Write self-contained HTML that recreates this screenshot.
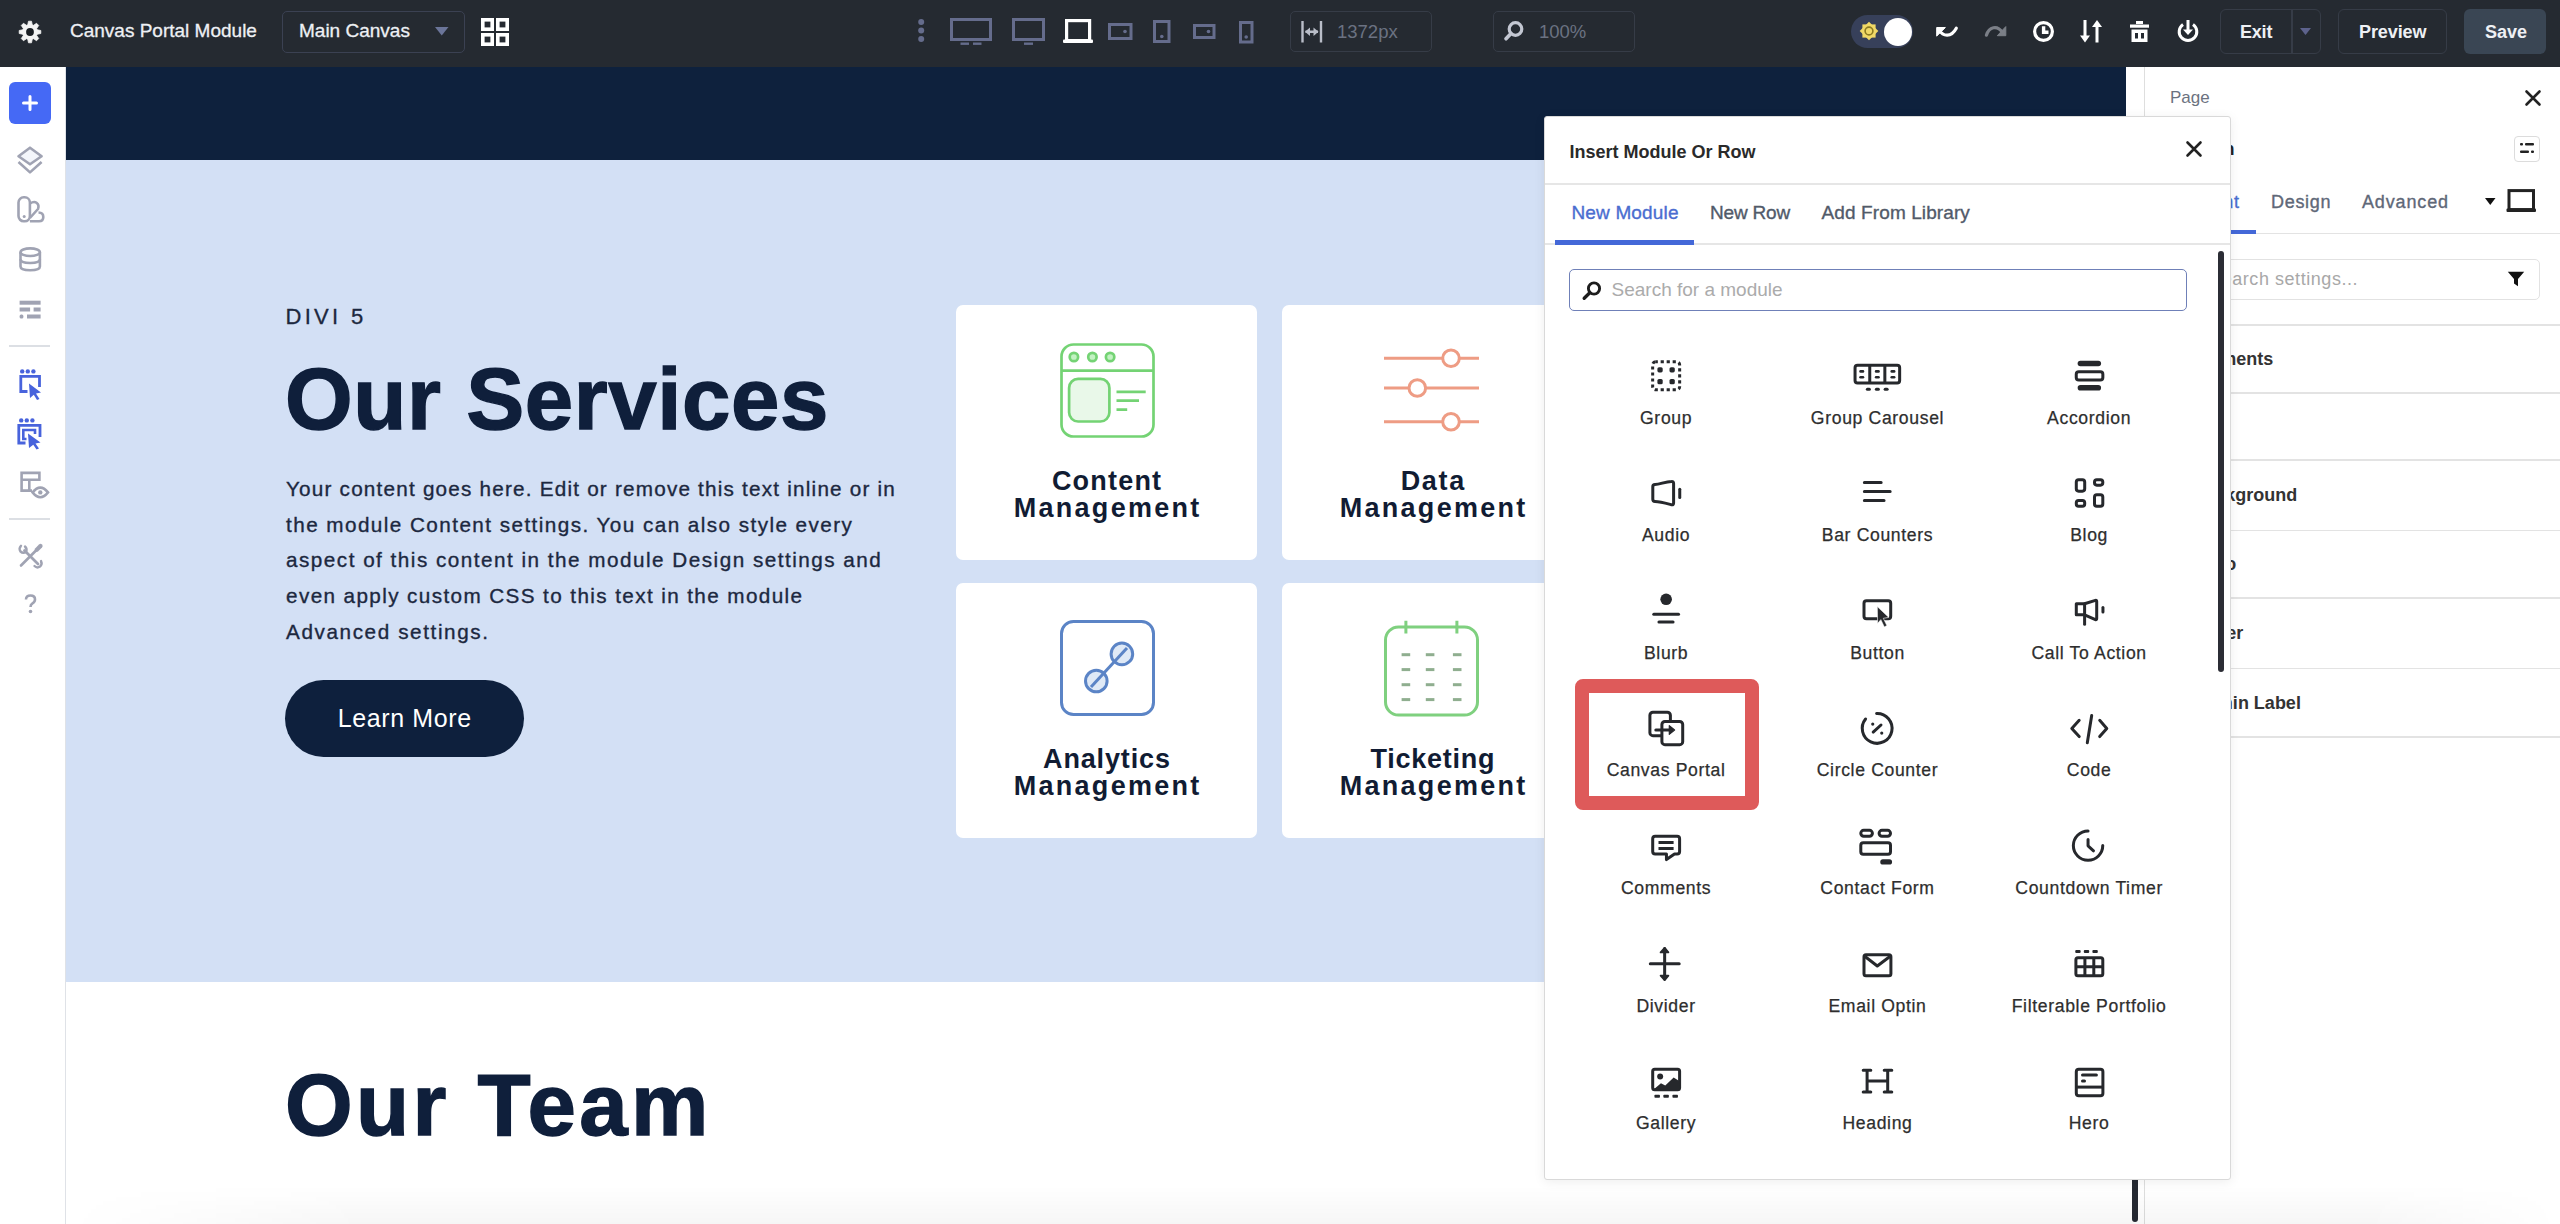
<!DOCTYPE html>
<html><head><meta charset="utf-8"><title>Canvas Portal Module</title>
<style>
*{margin:0;padding:0;box-sizing:border-box}
html,body{width:2560px;height:1224px;overflow:hidden;background:#fff;font-family:"Liberation Sans",sans-serif}
.a{position:absolute}
.t{white-space:nowrap;line-height:1}
svg{display:block;overflow:visible}
</style></head>
<body>
<div class="a" style="left:66px;top:67px;width:2060px;height:93px;background:#0e213d"></div>
<div class="a" style="left:66px;top:160px;width:2060px;height:822px;background:#d3e0f5"></div>
<div class="a" style="left:66px;top:982px;width:2060px;height:242px;background:#fff"></div>
<div class="a" style="left:2126px;top:67px;width:18px;height:1157px;background:#fff"></div>
<div class="a" style="left:0px;top:67px;width:65px;height:1157px;background:#fff"></div>
<div class="a" style="left:65px;top:67px;width:1px;height:1157px;background:#dfe2e7"></div>
<div class="a" style="left:9px;top:82px;width:42px;height:42px;border-radius:6px;background:#4569f5"></div>
<svg class="a" style="left:21px;top:94px" width="18" height="18"><path d="M9 2.5V15.5M2.5 9H15.5" stroke="#fff" stroke-width="3" stroke-linecap="round"/></svg>
<svg class="a" style="left:17px;top:146px" width="26" height="28"><g fill="none" stroke="#a0a3b3" stroke-width="2.6" stroke-linejoin="round"><path d="M13 1.7L24.6 10.2 13 18.3 1.5 10.2Z" fill="#f4f6fb"/><path d="M1.5 16L13 26.4 24.6 16"/></g></svg>
<svg class="a" style="left:17px;top:196px" width="28" height="27"><g fill="none" stroke="#a0a3b3" stroke-width="2.6" stroke-linejoin="round"><rect x="1.5" y="1.3" width="11.4" height="24" rx="5.2"/><path d="M12.9 7.5Q17 5 19.5 6.8Q22.5 9 21 13L12.9 22"/><path d="M12.9 25.3H22Q26.3 25.3 26.3 21Q26.3 16.6 21.5 16.5"/></g><circle cx="7.2" cy="20.5" r="1.5" fill="#a0a3b3"/></svg>
<svg class="a" style="left:19px;top:247px" width="23" height="25"><g fill="none" stroke="#a0a3b3" stroke-width="2.6"><ellipse cx="11.2" cy="5.2" rx="9.7" ry="3.8"/><path d="M1.5 5.2V19.5Q1.5 23.2 11.2 23.2Q20.9 23.2 20.9 19.5V5.2"/><path d="M1.5 12.3Q1.5 16 11.2 16Q20.9 16 20.9 12.3"/></g></svg>
<svg class="a" style="left:19px;top:300px" width="23" height="21"><g fill="#a0a3b3"><rect x="0.6" y="0.7" width="21" height="4"/><rect x="0.6" y="7.5" width="10.5" height="4"/><rect x="14.6" y="7.5" width="7" height="4"/><rect x="0.6" y="14.5" width="3.8" height="4" rx="1.5"/><rect x="8" y="14.5" width="13.6" height="4"/></g></svg>
<div class="a" style="left:9px;top:345px;width:41px;height:1.5px;background:#dcdfe4"></div>
<svg class="a" style="left:19px;top:369px" width="23" height="31"><g fill="#4863dc"><circle cx="3.2" cy="2.4" r="2.2"/><circle cx="8.8" cy="2.4" r="2.2"/><circle cx="14.4" cy="2.4" r="2.2"/></g><path d="M8.5 22.5H1.8V7.3H20.5V18" fill="none" stroke="#4863dc" stroke-width="2.8"/><path d="M10 14.5L22 23.5 17 24.5 20.5 30 18 31 14.8 25.8 11 29Z" fill="#4863dc"/></svg>
<svg class="a" style="left:17px;top:418px" width="26" height="31"><g fill="#4863dc"><circle cx="4.2" cy="2.4" r="2.2"/><circle cx="9.8" cy="2.4" r="2.2"/><circle cx="15.4" cy="2.4" r="2.2"/></g><path d="M8.5 25H1.8V7.3H23V19" fill="none" stroke="#4863dc" stroke-width="2.8"/><path d="M9.5 21H6.3V12H18V16" fill="none" stroke="#4863dc" stroke-width="2.6"/><path d="M11 15.5L23.5 24.5 18.5 25.5 22 30.5 19.5 31.5 16.3 26.8 12 30Z" fill="#4863dc"/></svg>
<svg class="a" style="left:19px;top:470px" width="32" height="31"><g fill="none" stroke="#a0a3b3" stroke-width="2.6"><path d="M13 20.6H2.6V2.9H20.4V11"/><path d="M2.6 9.7H20.4M10.3 9.7V20.6"/><path d="M13.6 22.4Q21.3 12.8 29 22.4Q21.3 32 13.6 22.4Z" fill="#fff"/></g><circle cx="21.3" cy="22.4" r="2.2" fill="#a0a3b3"/></svg>
<div class="a" style="left:9px;top:518px;width:41px;height:1.5px;background:#dcdfe4"></div>
<svg class="a" style="left:17px;top:544px" width="26" height="24"><g fill="none" stroke="#a0a3b3" stroke-linecap="round"><path d="M7.5 6.5L21 20" stroke-width="2.8"/><path d="M4 1.8Q1.5 4.5 3.5 7.5Q6 9.8 9 8Q10.5 4.8 8 2.5" stroke-width="2.4"/><path d="M24 17Q25.5 20.5 23 22.5Q20 24.5 17.5 22" stroke-width="2.4"/><path d="M19 6.5L4 21.5" stroke-width="2.6"/><path d="M19.8 5.7L23.5 2" stroke-width="4.2"/></g></svg>
<svg class="a" style="left:24px;top:594px" width="13" height="20"><path d="M2 5.5Q2 1.5 6.5 1.5Q11 1.5 11 5.3Q11 8 8.5 9.3Q6.5 10.5 6.5 13" fill="none" stroke="#a0a3b3" stroke-width="2.6"/><circle cx="6.5" cy="17.5" r="1.8" fill="#a0a3b3"/></svg>
<div class="a t" style="left:285.5px;top:305.7px;font-size:22px;color:#1c2840;letter-spacing:3.3px;-webkit-text-stroke:0.3px #1c2840">DIVI 5</div>
<div class="a t" style="left:285.0px;top:354.9px;font-size:87px;color:#0f1f3b;font-weight:bold;letter-spacing:0.6px;-webkit-text-stroke:1.4px #0f1f3b">Our Services</div>
<div class="a t" style="left:286.0px;top:478.7px;font-size:20.7px;color:#1c2840;letter-spacing:1.21px;-webkit-text-stroke:0.35px #1c2840">Your content goes here. Edit or remove this text inline or in</div>
<div class="a t" style="left:286.0px;top:514.5px;font-size:20.7px;color:#1c2840;letter-spacing:1.44px;-webkit-text-stroke:0.35px #1c2840">the module Content settings. You can also style every</div>
<div class="a t" style="left:286.0px;top:550.3px;font-size:20.7px;color:#1c2840;letter-spacing:1.49px;-webkit-text-stroke:0.35px #1c2840">aspect of this content in the module Design settings and</div>
<div class="a t" style="left:286.0px;top:586.1px;font-size:20.7px;color:#1c2840;letter-spacing:1.39px;-webkit-text-stroke:0.35px #1c2840">even apply custom CSS to this text in the module</div>
<div class="a t" style="left:286.0px;top:621.9px;font-size:20.7px;color:#1c2840;letter-spacing:1.6px;-webkit-text-stroke:0.35px #1c2840">Advanced settings.</div>
<div class="a" style="left:285px;top:680px;width:239px;height:77px;border-radius:39px;background:#0e203d"></div>
<div class="a t" style="left:337.8px;top:705.8px;font-size:25px;color:#fff;letter-spacing:0.6px;">Learn More</div>
<div class="a t" style="left:285.0px;top:1061.3px;font-size:87px;color:#0f1f3b;font-weight:bold;letter-spacing:3.4px;-webkit-text-stroke:1.4px #0f1f3b">Our Team</div>
<div class="a" style="left:956px;top:305px;width:301px;height:255px;border-radius:7px;background:#fff"></div>
<div class="a" style="left:1282px;top:305px;width:301px;height:255px;border-radius:7px;background:#fff"></div>
<div class="a" style="left:956px;top:583px;width:301px;height:255px;border-radius:7px;background:#fff"></div>
<div class="a" style="left:1282px;top:583px;width:301px;height:255px;border-radius:7px;background:#fff"></div>
<svg class="a" style="left:1060px;top:343px" width="95" height="95"><g fill="none" stroke="#74d374" stroke-width="2.7"><rect x="1.5" y="1.5" width="92" height="92" rx="12"/><path d="M1.5 27.6H93.5"/><g fill="#c2f2c2"><circle cx="13.9" cy="14" r="4.2"/><circle cx="32.4" cy="14" r="4.2"/><circle cx="50.1" cy="14" r="4.2"/></g><rect x="9.1" y="35.9" width="40.3" height="42.6" rx="9" fill="#e9f8e9"/><path d="M56.5 48.9H85.7M56.5 57.7H79M56.5 66.7H67.2"/></g></svg>
<svg class="a" style="left:1382px;top:340px" width="100" height="100"><g fill="none" stroke="#ee9c84" stroke-width="3"><path d="M2 18.3H97M2 48H97M2 81.7H97"/></g><g fill="#fff" stroke="#ee9c84" stroke-width="3"><circle cx="69" cy="18.3" r="8.3"/><circle cx="35.3" cy="48" r="8.3"/><circle cx="69" cy="81.7" r="8.3"/></g></svg>
<div class="a t" style="left:956.0px;top:468.1px;width:301px;text-align:center;font-size:27px;color:#111c33;font-weight:bold;letter-spacing:1.2px;text-indent:1.2px;">Content</div>
<div class="a t" style="left:956.0px;top:495.1px;width:301px;text-align:center;font-size:27px;color:#111c33;font-weight:bold;letter-spacing:2.3px;text-indent:2.3px;">Management</div>
<div class="a t" style="left:1282.0px;top:468.1px;width:301px;text-align:center;font-size:27px;color:#111c33;font-weight:bold;letter-spacing:1.7px;text-indent:1.7px;">Data</div>
<div class="a t" style="left:1282.0px;top:495.1px;width:301px;text-align:center;font-size:27px;color:#111c33;font-weight:bold;letter-spacing:2.3px;text-indent:2.3px;">Management</div>
<svg class="a" style="left:1060px;top:620px" width="95" height="96"><rect x="1.5" y="1.5" width="92" height="93" rx="12" fill="none" stroke="#5b84c6" stroke-width="3"/><g fill="#dfe9f6" stroke="#5b84c6" stroke-width="3"><circle cx="61.9" cy="33.9" r="10.8"/><circle cx="36.3" cy="61" r="10.8"/></g><path d="M31 67L67 28" stroke="#5b84c6" stroke-width="3"/></svg>
<svg class="a" style="left:1382px;top:618px" width="100" height="100"><g fill="none" stroke="#7fd07f" stroke-width="3"><rect x="3.5" y="9" width="92" height="88" rx="13"/><path d="M23.9 2.7V15.5M74.9 2.7V15.5"/></g><g stroke="#8fae8f" stroke-width="3"><path d="M19.6 36.7H28.2"/><path d="M19.6 51.6H28.2"/><path d="M19.6 66.7H28.2"/><path d="M19.6 81.6H28.2"/><path d="M43.8 36.7H52.4"/><path d="M43.8 51.6H52.4"/><path d="M43.8 66.7H52.4"/><path d="M43.8 81.6H52.4"/><path d="M70.9 36.7H79.5"/><path d="M70.9 51.6H79.5"/><path d="M70.9 66.7H79.5"/><path d="M70.9 81.6H79.5"/></g></svg>
<div class="a t" style="left:956.0px;top:746.3px;width:301px;text-align:center;font-size:27px;color:#111c33;font-weight:bold;letter-spacing:0.85px;text-indent:0.85px;">Analytics</div>
<div class="a t" style="left:956.0px;top:773.3px;width:301px;text-align:center;font-size:27px;color:#111c33;font-weight:bold;letter-spacing:2.3px;text-indent:2.3px;">Management</div>
<div class="a t" style="left:1282.0px;top:746.3px;width:301px;text-align:center;font-size:27px;color:#111c33;font-weight:bold;letter-spacing:0.75px;text-indent:0.75px;">Ticketing</div>
<div class="a t" style="left:1282.0px;top:773.3px;width:301px;text-align:center;font-size:27px;color:#111c33;font-weight:bold;letter-spacing:2.3px;text-indent:2.3px;">Management</div>
<div class="a" style="left:2144px;top:67px;width:416px;height:1157px;background:#fff;border-left:1px solid #dedede"></div>
<div class="a t" style="left:2170.0px;top:89.1px;font-size:17px;color:#6b7280;">Page</div>
<svg class="a" style="left:2525px;top:90px" width="16" height="16"><path d="M1.5 1.5L14.5 14.5M14.5 1.5L1.5 14.5" stroke="#222" stroke-width="2.6" stroke-linecap="round"/></svg>
<div class="a t" style="left:2114.6px;top:139.8px;width:120px;text-align:right;font-size:18px;color:#222;font-weight:bold;">Section</div>
<div class="a" style="left:2513.5px;top:135.5px;width:26px;height:26px;border:1.2px solid #dcdcdc;border-radius:4px;background:#fff"></div>
<svg class="a" style="left:2519px;top:142px" width="16" height="13"><g fill="#222"><rect x="1" y="1" width="3" height="2.6" rx="1"/><rect x="6" y="1" width="9" height="2.6" rx="1"/><rect x="1" y="8.5" width="9" height="2.6" rx="1"/><rect x="12" y="8.5" width="3" height="2.6" rx="1"/></g></svg>
<div class="a t" style="left:2119.7px;top:192.6px;width:120px;text-align:right;font-size:18px;color:#4a6dd0;letter-spacing:0.7px;-webkit-text-stroke:0.35px #4a6dd0">Content</div>
<div class="a t" style="left:2271.0px;top:192.6px;font-size:18px;color:#5f6878;letter-spacing:0.7px;-webkit-text-stroke:0.35px #5f6878">Design</div>
<div class="a t" style="left:2362.0px;top:192.6px;font-size:18px;color:#5f6878;letter-spacing:0.85px;-webkit-text-stroke:0.35px #5f6878">Advanced</div>
<svg class="a" style="left:2485px;top:198px" width="11" height="8"><path d="M0 0H10.5L5.25 7Z" fill="#111"/></svg>
<svg class="a" style="left:2506px;top:189px" width="31" height="25"><rect x="3" y="1.6" width="24.5" height="19" fill="none" stroke="#222" stroke-width="3"/><rect x="0.5" y="19.5" width="29.5" height="3.6" rx="1" fill="#222"/></svg>
<div class="a" style="left:2145px;top:232.5px;width:415px;height:1.5px;background:#e3e3e3"></div>
<div class="a" style="left:2160px;top:230px;width:96px;height:4px;background:#4468d8"></div>
<div class="a" style="left:2170px;top:258.5px;width:370px;height:41px;border:1.5px solid #e2e2e2;border-radius:5px"></div>
<div class="a t" style="left:2158.1px;top:270.3px;width:200px;text-align:right;font-size:18px;color:#a8a8a8;letter-spacing:0.55px;">Search settings...</div>
<svg class="a" style="left:2507px;top:271px" width="18" height="16"><path d="M0.8 0.8H17.2L11 8V15.2L7 12.5V8Z" fill="#111"/></svg>
<div class="a" style="left:2145px;top:324.25px;width:415px;height:1.5px;background:#e3e3e3"></div>
<div class="a" style="left:2145px;top:392.25px;width:415px;height:1.5px;background:#e3e3e3"></div>
<div class="a" style="left:2145px;top:459.25px;width:415px;height:1.5px;background:#e3e3e3"></div>
<div class="a" style="left:2145px;top:529.75px;width:415px;height:1.5px;background:#e3e3e3"></div>
<div class="a" style="left:2145px;top:597.25px;width:415px;height:1.5px;background:#e3e3e3"></div>
<div class="a" style="left:2145px;top:667.75px;width:415px;height:1.5px;background:#e3e3e3"></div>
<div class="a" style="left:2145px;top:736.25px;width:415px;height:1.5px;background:#e3e3e3"></div>
<div class="a t" style="left:2133.2px;top:349.8px;width:140px;text-align:right;font-size:18px;color:#2b2b2b;font-weight:bold;color:#333">Elements</div>
<div class="a t" style="left:2089.0px;top:417.8px;width:140px;text-align:right;font-size:18px;color:#2b2b2b;font-weight:bold;color:#333">Link</div>
<div class="a t" style="left:2157.3px;top:486.3px;width:140px;text-align:right;font-size:18px;color:#2b2b2b;font-weight:bold;color:#333">Background</div>
<div class="a t" style="left:2096.2px;top:554.6px;width:140px;text-align:right;font-size:18px;color:#2b2b2b;font-weight:bold;color:#333">Logo</div>
<div class="a t" style="left:2103.4px;top:623.8px;width:140px;text-align:right;font-size:18px;color:#2b2b2b;font-weight:bold;color:#333">Order</div>
<div class="a t" style="left:2160.9px;top:693.8px;width:140px;text-align:right;font-size:18px;color:#2b2b2b;font-weight:bold;color:#333">Admin Label</div>
<div class="a" style="left:2132px;top:1170px;width:6px;height:52px;background:#262a33;border-radius:3px"></div>
<div class="a" style="left:66px;top:1186px;width:2494px;height:38px;background:linear-gradient(rgba(0,0,0,0),rgba(0,0,0,0.035));-webkit-mask-image:linear-gradient(90deg,transparent 0,#000 300px,#000 2300px,transparent 2494px)"></div>
<div class="a" style="left:1544px;top:116px;width:687px;height:1064px;background:#fff;border:1px solid #d9d9d9;border-radius:3px;box-shadow:0 2px 12px rgba(0,0,0,0.07)"></div>
<div class="a t" style="left:1569.5px;top:142.8px;font-size:18px;color:#2a2a2a;font-weight:bold;">Insert Module Or Row</div>
<svg class="a" style="left:2186px;top:141px" width="16" height="16"><path d="M1.5 1.5L14.5 14.5M14.5 1.5L1.5 14.5" stroke="#222" stroke-width="2.6" stroke-linecap="round"/></svg>
<div class="a" style="left:1545px;top:183px;width:685px;height:2px;background:#e6e6e6"></div>
<div class="a t" style="left:1571.5px;top:202.9px;font-size:19px;color:#4a6dd0;letter-spacing:0.15px;-webkit-text-stroke:0.35px #4a6dd0">New Module</div>
<div class="a t" style="left:1710.0px;top:202.9px;font-size:19px;color:#515a69;letter-spacing:-0.2px;-webkit-text-stroke:0.35px #515a69">New Row</div>
<div class="a t" style="left:1821.6px;top:202.9px;font-size:19px;color:#515a69;letter-spacing:0.1px;-webkit-text-stroke:0.35px #515a69">Add From Library</div>
<div class="a" style="left:1545px;top:243px;width:685px;height:2px;background:#e6e6e6"></div>
<div class="a" style="left:1555px;top:240px;width:139px;height:4.5px;background:#4468d8"></div>
<div class="a" style="left:1569px;top:269px;width:618px;height:42px;border:1.8px solid #6f80b8;border-radius:5px"></div>
<svg class="a" style="left:1582px;top:281px" width="20" height="19"><circle cx="12" cy="7.5" r="5.6" fill="none" stroke="#1d1d1d" stroke-width="2.9"/><path d="M7.8 11.8L2.2 17.2" stroke="#1d1d1d" stroke-width="3.4" stroke-linecap="round"/></svg>
<div class="a t" style="left:1611.5px;top:279.9px;font-size:19px;color:#ababab;">Search for a module</div>
<div class="a" style="left:2217.5px;top:251px;width:6px;height:421px;background:#2b2d35;border-radius:3px"></div>
<svg class="a" style="left:1640.75px;top:355.60px" width="50" height="40"><rect x="11.65" y="5.8" width="27" height="28" rx="3" fill="none" stroke="#26282c" stroke-width="3.0" stroke-dasharray="3.2 2.8" stroke-dashoffset="1"/><rect x="16.40" y="11.15" width="5.3" height="5.3" rx="1.6" fill="#26282c"/><rect x="16.40" y="22.95" width="5.3" height="5.3" rx="1.6" fill="#26282c"/><rect x="28.50" y="11.15" width="5.3" height="5.3" rx="1.6" fill="#26282c"/><rect x="28.50" y="22.95" width="5.3" height="5.3" rx="1.6" fill="#26282c"/></svg>
<div class="a t" style="left:1560.8px;top:409.6px;width:210px;text-align:center;font-size:17.6px;color:#2e2e2e;letter-spacing:0.65px;text-indent:0.65px;-webkit-text-stroke:0.25px #2e2e2e">Group</div>
<svg class="a" style="left:1852.25px;top:355.60px" width="50" height="40"><rect x="3.05" y="9.3" width="44.6" height="17.6" rx="2.5" fill="none" stroke="#26282c" stroke-width="3.0"/><path d="M17.75 9.3V26.9M32.85 9.3V26.9" fill="none" stroke="#26282c" stroke-width="3.0"/><rect x="7.25" y="14.10" width="5" height="2.6" rx="1.3" fill="#26282c"/><rect x="7.25" y="20.00" width="5" height="2.6" rx="1.3" fill="#26282c"/><rect x="22.80" y="14.10" width="5" height="2.6" rx="1.3" fill="#26282c"/><rect x="22.80" y="20.00" width="5" height="2.6" rx="1.3" fill="#26282c"/><rect x="38.45" y="14.10" width="5" height="2.6" rx="1.3" fill="#26282c"/><rect x="38.45" y="20.00" width="5" height="2.6" rx="1.3" fill="#26282c"/><rect x="13.85" y="31.7" width="5" height="3" rx="1.5" fill="#26282c"/><rect x="22.85" y="31.7" width="5" height="3" rx="1.5" fill="#26282c"/><rect x="31.65" y="31.7" width="5" height="3" rx="1.5" fill="#26282c"/></svg>
<div class="a t" style="left:1772.2px;top:409.6px;width:210px;text-align:center;font-size:17.6px;color:#2e2e2e;letter-spacing:0.65px;text-indent:0.65px;-webkit-text-stroke:0.25px #2e2e2e">Group Carousel</div>
<svg class="a" style="left:2063.75px;top:355.60px" width="50" height="40"><rect x="13.65" y="4.8" width="23.4" height="5.5" rx="2.75" fill="#26282c"/><rect x="12.25" y="15.7" width="26.6" height="8.2" rx="2.5" fill="none" stroke="#26282c" stroke-width="3.0"/><rect x="13.65" y="28.9" width="23.4" height="5.7" rx="2.85" fill="#26282c"/></svg>
<div class="a t" style="left:1983.8px;top:409.6px;width:210px;text-align:center;font-size:17.6px;color:#2e2e2e;letter-spacing:0.65px;text-indent:0.65px;-webkit-text-stroke:0.25px #2e2e2e">Accordion</div>
<svg class="a" style="left:1640.75px;top:473.20px" width="50" height="40"><path d="M14 11.5C19 11.5 24 8.5 30.5 8.4Q32.6 8.3 32.6 10.4V30Q32.6 32.2 30.5 31.8C24 30 19 28.5 14 28.5Q11.8 28.5 11.8 26.3V13.7Q11.8 11.5 14 11.5Z" fill="none" stroke="#26282c" stroke-width="3.0" stroke-linejoin="round"/><path d="M38.75 16.2V24.4" fill="none" stroke="#26282c" stroke-width="3.0" stroke-linecap="round"/></svg>
<div class="a t" style="left:1560.8px;top:527.2px;width:210px;text-align:center;font-size:17.6px;color:#2e2e2e;letter-spacing:0.65px;text-indent:0.65px;-webkit-text-stroke:0.25px #2e2e2e">Audio</div>
<svg class="a" style="left:1852.25px;top:473.20px" width="50" height="40"><path d="M12.35 9.5H29.15M12.35 18.5H38.15M12.35 27.4H32.05" fill="none" stroke="#26282c" stroke-width="3.0" stroke-width="3" stroke-linecap="round"/></svg>
<div class="a t" style="left:1772.2px;top:527.2px;width:210px;text-align:center;font-size:17.6px;color:#2e2e2e;letter-spacing:0.65px;text-indent:0.65px;-webkit-text-stroke:0.25px #2e2e2e">Bar Counters</div>
<svg class="a" style="left:2063.75px;top:473.20px" width="50" height="40"><rect x="12.3" y="6.75" width="8.4" height="11.4" rx="2.3" fill="none" stroke="#26282c" stroke-width="3.0"/><rect x="30.5" y="6.75" width="8.3" height="5.4" rx="2.3" fill="none" stroke="#26282c" stroke-width="3.0"/><rect x="12.3" y="27.55" width="8.4" height="5.7" rx="2.3" fill="none" stroke="#26282c" stroke-width="3.0"/><rect x="30.5" y="21.65" width="8.3" height="11.6" rx="2.3" fill="none" stroke="#26282c" stroke-width="3.0"/></svg>
<div class="a t" style="left:1983.8px;top:527.2px;width:210px;text-align:center;font-size:17.6px;color:#2e2e2e;letter-spacing:0.65px;text-indent:0.65px;-webkit-text-stroke:0.25px #2e2e2e">Blog</div>
<svg class="a" style="left:1640.75px;top:590.80px" width="50" height="40"><circle cx="25.15" cy="8.3" r="5.8" fill="#26282c"/><path d="M12.75 23.2H37.55" fill="none" stroke="#26282c" stroke-width="3.0" stroke-width="5" stroke-linecap="round"/><path d="M17.95 31H32.05" fill="none" stroke="#26282c" stroke-width="3.0" stroke-width="3" stroke-linecap="round"/></svg>
<div class="a t" style="left:1560.8px;top:644.8px;width:210px;text-align:center;font-size:17.6px;color:#2e2e2e;letter-spacing:0.65px;text-indent:0.65px;-webkit-text-stroke:0.25px #2e2e2e">Blurb</div>
<svg class="a" style="left:1852.25px;top:590.80px" width="50" height="40"><rect x="12" y="9.65" width="26.7" height="18.1" rx="2.5" fill="none" stroke="#26282c" stroke-width="3.0"/><path d="M25.3 15.6L36.8 26.4L31.3 27.3L34.9 34.6L32.3 35.9L28.8 28.6L25.6 32.6Z" fill="#26282c" stroke="#fff" stroke-width="0.6"/></svg>
<div class="a t" style="left:1772.2px;top:644.8px;width:210px;text-align:center;font-size:17.6px;color:#2e2e2e;letter-spacing:0.65px;text-indent:0.65px;-webkit-text-stroke:0.25px #2e2e2e">Button</div>
<svg class="a" style="left:2063.75px;top:590.80px" width="50" height="40"><path d="M12.3 12.75H20.6L31.4 9.4Q32.7 9 32.7 10.5V27.6Q32.7 29.1 31.4 28.6L20.6 23.85H12.3Z" fill="none" stroke="#26282c" stroke-width="3.0" stroke-linejoin="round"/><path d="M20.6 12.75V33.3" fill="none" stroke="#26282c" stroke-width="3.0" stroke-linecap="round"/><path d="M38.95 16.4V21" fill="none" stroke="#26282c" stroke-width="3.0" stroke-linecap="round"/></svg>
<div class="a t" style="left:1983.8px;top:644.8px;width:210px;text-align:center;font-size:17.6px;color:#2e2e2e;letter-spacing:0.65px;text-indent:0.65px;-webkit-text-stroke:0.25px #2e2e2e">Call To Action</div>
<svg class="a" style="left:1640.75px;top:708.40px" width="50" height="40"><rect x="8.9" y="4.15" width="20.5" height="23.5" rx="3" fill="none" stroke="#26282c" stroke-width="3.0"/><rect x="20.9" y="13.55" width="20.8" height="23.1" rx="3" fill="#fff" stroke="#26282c" stroke-width="3.0"/><path d="M14.8 22H29" fill="none" stroke="#26282c" stroke-width="3.0" stroke-linecap="round"/><path d="M28.3 17.6L33.6 22L28.3 26.4Z" fill="#26282c" stroke="#26282c" stroke-width="1.2" stroke-linejoin="round"/></svg>
<div class="a t" style="left:1560.8px;top:762.4px;width:210px;text-align:center;font-size:17.6px;color:#2e2e2e;letter-spacing:0.65px;text-indent:0.65px;-webkit-text-stroke:0.25px #2e2e2e">Canvas Portal</div>
<svg class="a" style="left:1852.25px;top:708.40px" width="50" height="40"><path d="M24.6 5.5A14.9 14.9 0 1 1 13.57 11.02" fill="none" stroke="#26282c" stroke-width="3.0" stroke-linecap="round"/><path d="M21.2 24.1L29 17" fill="none" stroke="#26282c" stroke-width="3.0" stroke-linecap="round"/><circle cx="20.75" cy="16.1" r="1.6" fill="#26282c"/><circle cx="29.75" cy="25.1" r="1.6" fill="#26282c"/></svg>
<div class="a t" style="left:1772.2px;top:762.4px;width:210px;text-align:center;font-size:17.6px;color:#2e2e2e;letter-spacing:0.65px;text-indent:0.65px;-webkit-text-stroke:0.25px #2e2e2e">Circle Counter</div>
<svg class="a" style="left:2063.75px;top:708.40px" width="50" height="40"><path d="M15.2 12.3L7.8 20.4L15.2 28.6M35.7 12.3L42.8 20.4L35.7 28.6M27.7 7.4L23.3 34.8" fill="none" stroke="#26282c" stroke-width="3.0" stroke-linecap="round" stroke-linejoin="round"/></svg>
<div class="a t" style="left:1983.8px;top:762.4px;width:210px;text-align:center;font-size:17.6px;color:#2e2e2e;letter-spacing:0.65px;text-indent:0.65px;-webkit-text-stroke:0.25px #2e2e2e">Code</div>
<svg class="a" style="left:1640.75px;top:826.00px" width="50" height="40"><path d="M14.2 10.35H36.1Q38.6 10.35 38.6 12.85V25.55Q38.6 28.05 36.1 28.05H33.5L25.45 33.6V28.05H14.2Q11.7 28.05 11.7 25.55V12.85Q11.7 10.35 14.2 10.35Z" fill="none" stroke="#26282c" stroke-width="3.0" stroke-linejoin="round"/><path d="M17.5 16.5H32.6M17.5 22.4H32.6" fill="none" stroke="#26282c" stroke-width="3.0" stroke-width="3"/></svg>
<div class="a t" style="left:1560.8px;top:880.0px;width:210px;text-align:center;font-size:17.6px;color:#2e2e2e;letter-spacing:0.65px;text-indent:0.65px;-webkit-text-stroke:0.25px #2e2e2e">Comments</div>
<svg class="a" style="left:1852.25px;top:826.00px" width="50" height="40"><rect x="8.8" y="4.35" width="11.6" height="5.9" rx="2.9" fill="none" stroke="#26282c" stroke-width="3.0"/><rect x="27.1" y="4.35" width="11.4" height="5.9" rx="2.9" fill="none" stroke="#26282c" stroke-width="3.0"/><rect x="8.8" y="16.65" width="29.7" height="11.6" rx="2.5" fill="none" stroke="#26282c" stroke-width="3.0"/><rect x="28.25" y="33.3" width="11.8" height="5.3" rx="2.65" fill="#26282c"/></svg>
<div class="a t" style="left:1772.2px;top:880.0px;width:210px;text-align:center;font-size:17.6px;color:#2e2e2e;letter-spacing:0.65px;text-indent:0.65px;-webkit-text-stroke:0.25px #2e2e2e">Contact Form</div>
<svg class="a" style="left:2063.75px;top:826.00px" width="50" height="40"><path d="M24.05 4.9A14.7 14.7 0 1 0 38.75 19.6" fill="none" stroke="#26282c" stroke-width="3.0" stroke-linecap="round"/><path d="M24.05 13.4V19.8L29.5 24.8" fill="none" stroke="#26282c" stroke-width="3.0" stroke-linecap="round" stroke-linejoin="round"/></svg>
<div class="a t" style="left:1983.8px;top:880.0px;width:210px;text-align:center;font-size:17.6px;color:#2e2e2e;letter-spacing:0.65px;text-indent:0.65px;-webkit-text-stroke:0.25px #2e2e2e">Countdown Timer</div>
<svg class="a" style="left:1640.75px;top:943.60px" width="50" height="40"><path d="M23.65 4.5V35M9.3 19.8H38.2" fill="none" stroke="#26282c" stroke-width="3.0" stroke-linecap="round"/><path d="M19.6 8.4L23.65 3.9L27.4 8.4Z" fill="#26282c" stroke="#26282c" stroke-width="1.8" stroke-linejoin="round"/><path d="M19.6 31.6L23.65 36.1L27.4 31.6Z" fill="#26282c" stroke="#26282c" stroke-width="1.8" stroke-linejoin="round"/></svg>
<div class="a t" style="left:1560.8px;top:997.6px;width:210px;text-align:center;font-size:17.6px;color:#2e2e2e;letter-spacing:0.65px;text-indent:0.65px;-webkit-text-stroke:0.25px #2e2e2e">Divider</div>
<svg class="a" style="left:1852.25px;top:943.60px" width="50" height="40"><rect x="12" y="10.65" width="26.9" height="21" rx="2" fill="none" stroke="#26282c" stroke-width="3.0"/><path d="M13 12.5L25.3 22L37.9 12.5" fill="none" stroke="#26282c" stroke-width="3.0" stroke-linejoin="round"/></svg>
<div class="a t" style="left:1772.2px;top:997.6px;width:210px;text-align:center;font-size:17.6px;color:#2e2e2e;letter-spacing:0.65px;text-indent:0.65px;-webkit-text-stroke:0.25px #2e2e2e">Email Optin</div>
<svg class="a" style="left:2063.75px;top:943.60px" width="50" height="40"><rect x="11.9" y="13.85" width="26.9" height="17.8" rx="2" fill="none" stroke="#26282c" stroke-width="3.0"/><path d="M20.9 13.85V31.6M29.8 13.85V31.6M11.9 22.7H38.8" fill="none" stroke="#26282c" stroke-width="3.0"/><rect x="11.25" y="5.9" width="5.4" height="3" rx="1" fill="#26282c"/><rect x="19.80" y="5.9" width="5.4" height="3" rx="1" fill="#26282c"/><rect x="28.40" y="5.9" width="5.4" height="3" rx="1" fill="#26282c"/></svg>
<div class="a t" style="left:1983.8px;top:997.6px;width:210px;text-align:center;font-size:17.6px;color:#2e2e2e;letter-spacing:0.65px;text-indent:0.65px;-webkit-text-stroke:0.25px #2e2e2e">Filterable Portfolio</div>
<svg class="a" style="left:1640.75px;top:1061.20px" width="50" height="40"><rect x="11.7" y="8.25" width="26.9" height="20.6" rx="2" fill="none" stroke="#26282c" stroke-width="3.0"/><circle cx="19.15" cy="15.5" r="3" fill="#26282c"/><path d="M12 29L19.95 22.2L24.25 24.5L32.65 16.5L38.6 20.2V29Z" fill="#26282c"/><rect x="13.45" y="33.8" width="5.5" height="3" rx="0.8" fill="#26282c"/><rect x="22.35" y="33.8" width="5.5" height="3" rx="0.8" fill="#26282c"/><rect x="31.45" y="33.8" width="5.5" height="3" rx="0.8" fill="#26282c"/></svg>
<div class="a t" style="left:1560.8px;top:1115.2px;width:210px;text-align:center;font-size:17.6px;color:#2e2e2e;letter-spacing:0.65px;text-indent:0.65px;-webkit-text-stroke:0.25px #2e2e2e">Gallery</div>
<svg class="a" style="left:1852.25px;top:1061.20px" width="50" height="40"><path d="M15.1 9.3V30.8M35.7 9.3V30.8M15.1 20H35.7" fill="none" stroke="#26282c" stroke-width="3.0"/><path d="M11.2 9.2H18.8M32.2 9.2H39.8M11.2 30.9H18.8M32.2 30.9H39.8" fill="none" stroke="#26282c" stroke-width="3.0" stroke-width="2.9" stroke-linecap="round"/></svg>
<div class="a t" style="left:1772.2px;top:1115.2px;width:210px;text-align:center;font-size:17.6px;color:#2e2e2e;letter-spacing:0.65px;text-indent:0.65px;-webkit-text-stroke:0.25px #2e2e2e">Heading</div>
<svg class="a" style="left:2063.75px;top:1061.20px" width="50" height="40"><rect x="12.3" y="8.25" width="26.6" height="26.5" rx="2.5" fill="none" stroke="#26282c" stroke-width="3.0"/><path d="M12.3 26.1H38.9" fill="none" stroke="#26282c" stroke-width="3.0"/><path d="M18.5 14H32.4M18.5 20H20.5" fill="none" stroke="#26282c" stroke-width="3.0" stroke-width="2.6" stroke-linecap="round"/></svg>
<div class="a t" style="left:1983.8px;top:1115.2px;width:210px;text-align:center;font-size:17.6px;color:#2e2e2e;letter-spacing:0.65px;text-indent:0.65px;-webkit-text-stroke:0.25px #2e2e2e">Hero</div>
<div class="a" style="left:1574.5px;top:679.2px;width:184px;height:131px;border:14.5px solid #de5a5a;border-radius:8px"></div>
<div class="a" style="left:0px;top:0px;width:2560px;height:67px;background:#252a31"></div>
<svg class="a" style="left:19px;top:20.5px" width="22" height="22"><path d="M9.48 0.21 L12.52 0.21 L13.22 3.73 L14.57 4.29 L17.56 2.29 L19.71 4.44 L17.71 7.43 L18.27 8.78 L21.79 9.48 L21.79 12.52 L18.27 13.22 L17.71 14.57 L19.71 17.56 L17.56 19.71 L14.57 17.71 L13.22 18.27 L12.52 21.79 L9.48 21.79 L8.78 18.27 L7.43 17.71 L4.44 19.71 L2.29 17.56 L4.29 14.57 L3.73 13.22 L0.21 12.52 L0.21 9.48 L3.73 8.78 L4.29 7.43 L2.29 4.44 L4.44 2.29 L7.43 4.29 L8.78 3.73Z" fill="#f4f4f4" stroke="#f4f4f4" stroke-width="0.8" stroke-linejoin="round"/><circle cx="11" cy="11" r="3.9" fill="#1b1f24"/></svg>
<div class="a t" style="left:70.0px;top:20.9px;font-size:19px;color:#eef0f4;-webkit-text-stroke:0.3px #eef0f4">Canvas Portal Module</div>
<div class="a" style="left:282px;top:11px;width:183px;height:42px;border:1.5px solid #3b4152;border-radius:5px"></div>
<div class="a t" style="left:299.0px;top:20.9px;font-size:19px;color:#eef0f4;-webkit-text-stroke:0.3px #eef0f4">Main Canvas</div>
<svg class="a" style="left:435px;top:27px" width="14" height="9"><path d="M0 0H13.5L6.75 8.5Z" fill="#6b7599"/></svg>
<svg class="a" style="left:481px;top:18px" width="28" height="28"><g fill="none" stroke="#fff" stroke-width="3.6"><rect x="1.8" y="1.8" width="9.4" height="9.4"/><rect x="16.8" y="1.8" width="9.4" height="9.4"/><rect x="1.8" y="16.8" width="9.4" height="9.4"/><rect x="16.8" y="16.8" width="9.4" height="9.4"/></g></svg>
<svg class="a" style="left:918px;top:19px" width="7" height="24"><g fill="#656c8c"><circle cx="3.2" cy="3" r="3"/><circle cx="3.2" cy="11.5" r="3"/><circle cx="3.2" cy="20" r="3"/></g></svg>
<svg class="a" style="left:950px;top:18px" width="44" height="28"><rect x="1.5" y="1.5" width="39" height="20" fill="none" stroke="#656c8c" stroke-width="3"/><rect x="0" y="20" width="42" height="3" fill="#656c8c"/><rect x="10.5" y="24.5" width="8.5" height="2.4" fill="#656c8c"/><rect x="23" y="24.5" width="8.5" height="2.4" fill="#656c8c"/></svg>
<svg class="a" style="left:1012px;top:18px" width="34" height="28"><rect x="1.5" y="1.5" width="30" height="20" fill="none" stroke="#656c8c" stroke-width="3"/><rect x="0" y="20" width="33" height="3" fill="#656c8c"/><rect x="12" y="24.5" width="9" height="2.4" fill="#656c8c"/></svg>
<svg class="a" style="left:1063px;top:19px" width="31" height="26"><rect x="3.6" y="1.6" width="23" height="20" fill="none" stroke="#fff" stroke-width="3.2"/><rect x="0" y="20.5" width="30" height="3.6" rx="1" fill="#fff"/></svg>
<svg class="a" style="left:1108px;top:23px" width="25" height="17"><rect x="1.5" y="1.5" width="21.5" height="14" fill="none" stroke="#656c8c" stroke-width="3"/><circle cx="17" cy="8.5" r="1.8" fill="#656c8c"/></svg>
<svg class="a" style="left:1153px;top:20px" width="18" height="23"><rect x="1.5" y="1.5" width="14.5" height="20" fill="none" stroke="#656c8c" stroke-width="3"/><circle cx="8.8" cy="16.5" r="1.8" fill="#656c8c"/></svg>
<svg class="a" style="left:1193px;top:24px" width="23" height="16"><rect x="1.5" y="1.5" width="19.5" height="12" fill="none" stroke="#656c8c" stroke-width="3"/><circle cx="15.5" cy="7.5" r="1.8" fill="#656c8c"/></svg>
<svg class="a" style="left:1239px;top:21px" width="15" height="23"><rect x="1.5" y="1.5" width="11.5" height="19.5" fill="none" stroke="#656c8c" stroke-width="3"/><circle cx="7.2" cy="16" r="1.8" fill="#656c8c"/></svg>
<div class="a" style="left:1290px;top:11px;width:142px;height:41px;border:1.5px solid #363c47;border-radius:5px"></div>
<svg class="a" style="left:1301px;top:21px" width="22" height="22"><g stroke="#b9bdc8" stroke-width="2.4" fill="none"><path d="M1.5 0V21.5M20 0V21.5M4.5 10.8H17"/></g><g fill="#b9bdc8"><path d="M4 10.8L9 6.5V15Z"/><path d="M17.5 10.8L12.5 6.5V15Z"/></g></svg>
<div class="a t" style="left:1337.0px;top:23.3px;font-size:18.5px;color:#6b7282;">1372px</div>
<div class="a" style="left:1493px;top:11px;width:142px;height:41px;border:1.5px solid #363c47;border-radius:5px"></div>
<svg class="a" style="left:1504px;top:21px" width="20" height="20"><circle cx="11.5" cy="8" r="6.3" fill="none" stroke="#c3c7d2" stroke-width="3.2"/><path d="M7 12.5L2 17.8" stroke="#c3c7d2" stroke-width="3.6" stroke-linecap="round"/></svg>
<div class="a t" style="left:1539.0px;top:23.3px;font-size:18.5px;color:#6b7282;">100%</div>
<div class="a" style="left:1851px;top:15px;width:62px;height:33px;border-radius:17px;background:#37405a"></div>
<svg class="a" style="left:1859px;top:21px" width="20" height="20"><g transform="translate(10 10)" fill="#f0d866"><rect x="-6.6" y="-6.6" width="13.2" height="13.2"/><rect x="-6.6" y="-6.6" width="13.2" height="13.2" transform="rotate(45)"/></g><circle cx="10" cy="10" r="3.9" fill="none" stroke="#8c7a22" stroke-width="1.6"/></svg>
<div class="a" style="left:1884px;top:18px;width:28px;height:28px;border-radius:50%;background:#fff"></div>
<svg class="a" style="left:1934px;top:24px" width="24" height="14"><path d="M2.7 3.5H11.4L2.7 12.1Z" fill="#fff" stroke="#fff" stroke-width="1" stroke-linejoin="round"/><path d="M5 6C9 12.5 17 14 22.3 4.2" fill="none" stroke="#fff" stroke-width="3.2" stroke-linecap="round"/></svg>
<svg class="a" style="left:1984px;top:24px" width="24" height="14"><path d="M21.8 2.6V11.7H13.3Z" fill="#7b7f87" stroke="#7b7f87" stroke-width="1" stroke-linejoin="round"/><path d="M2.4 11.2C5 3 13 0.5 18.5 8.5" fill="none" stroke="#7b7f87" stroke-width="3.2" stroke-linecap="round"/></svg>
<svg class="a" style="left:2033px;top:21px" width="22" height="22"><circle cx="10.5" cy="10.5" r="8.9" fill="none" stroke="#fff" stroke-width="3.2"/><path d="M10.6 5.3V11.2H15.5" fill="none" stroke="#fff" stroke-width="3.4"/></svg>
<svg class="a" style="left:2080px;top:20px" width="23" height="23"><g stroke="#fff" stroke-width="3" fill="none"><path d="M5 0V18M17 5V22.5"/></g><g fill="#fff"><path d="M0 15.5H10L5 22.5Z"/><path d="M12 7H22L17 0Z"/></g></svg>
<svg class="a" style="left:2130px;top:21px" width="19" height="21"><g fill="#fff"><rect x="6" y="0" width="7" height="3"/><rect x="0" y="3.5" width="19" height="3.2"/><path d="M1.5 8.5H17.5V21H1.5Z"/></g><g fill="#252a31"><rect x="5" y="12" width="3" height="5.5"/><rect x="11" y="12" width="3" height="5.5"/></g></svg>
<svg class="a" style="left:2177px;top:20px" width="22" height="22"><path d="M6 4.5A8.8 8.8 0 1 0 16 4.5" fill="none" stroke="#fff" stroke-width="3"/><path d="M11 0V12" stroke="#fff" stroke-width="3"/><path d="M6 9.5H16L11 15Z" fill="#fff"/></svg>
<div class="a" style="left:2220px;top:9px;width:101px;height:45px;border:1.5px solid #363c47;border-radius:6px"></div>
<div class="a" style="left:2291px;top:9px;width:1.5px;height:45px;background:#363c47"></div>
<div class="a t" style="left:2240.0px;top:22.8px;font-size:18px;color:#eef0f4;font-weight:bold;letter-spacing:-0.2px;">Exit</div>
<svg class="a" style="left:2300px;top:28px" width="12" height="8"><path d="M0 0H11L5.5 7Z" fill="#5d628c"/></svg>
<div class="a" style="left:2338px;top:9px;width:109px;height:45px;border:1.5px solid #363c47;border-radius:6px"></div>
<div class="a t" style="left:2359.0px;top:22.8px;font-size:18px;color:#eef0f4;font-weight:bold;letter-spacing:-0.1px;">Preview</div>
<div class="a" style="left:2464px;top:9px;width:82px;height:45px;border-radius:6px;background:#3a4654"></div>
<div class="a t" style="left:2485.0px;top:22.8px;font-size:18px;color:#eef0f4;font-weight:bold;">Save</div>
</body></html>
